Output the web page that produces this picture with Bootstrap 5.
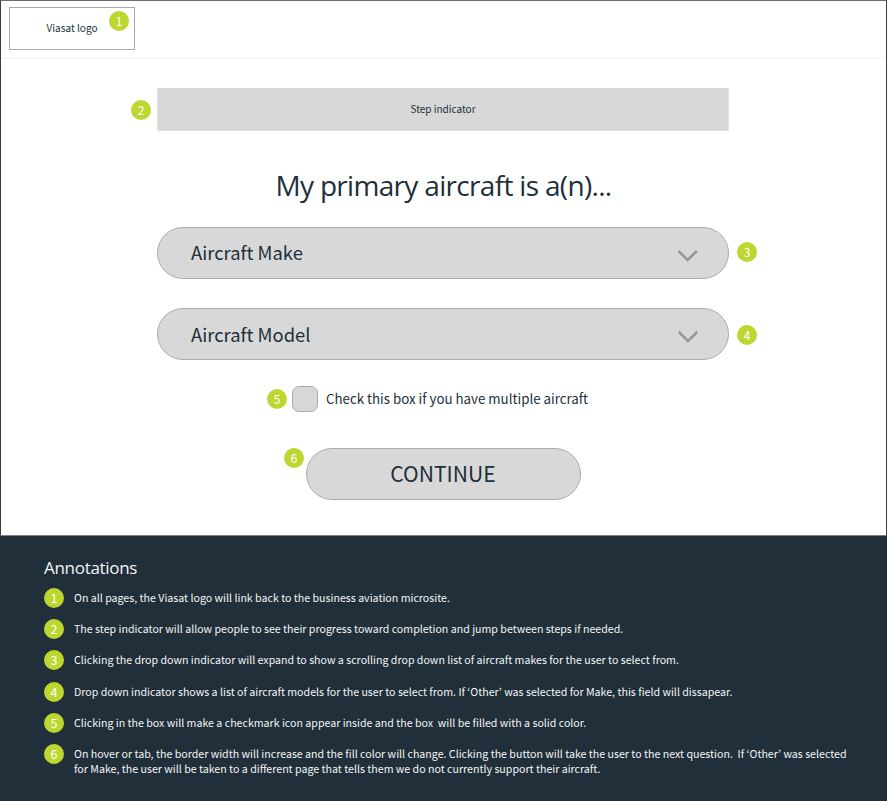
<!DOCTYPE html>
<html lang="en">
<head>
<meta charset="utf-8">
<meta name="viewport" content="width=device-width, initial-scale=1">
<title>Primary aircraft</title>
<link href="https://cdn.jsdelivr.net/npm/bootstrap@5.3.0/dist/css/bootstrap.min.css" rel="stylesheet">
<style>
:root{--ink:#212f3a;--fill:#d8d8d8;--edge:#acacac;--lime:#bed730}
body{font-family:"Noto Sans CJK KR",sans-serif;color:var(--ink);background:var(--ink);height:801px;overflow:hidden}
.screen{height:536px;border:1px solid #3c3c3c;border-top-color:#6d6d6d;border-bottom-color:#7d8488}
.topbar{height:58px;padding:6px 8px;border-bottom:2px solid #f8f8f8}
.logo-box{width:126px;height:43px;padding-bottom:2px;border:1px solid #a9a9a9;font-size:10.05px}
.dot{width:20px;height:20px;flex:none;border-radius:50%;background:var(--lime);color:#fff;font-size:12px;line-height:20px;text-align:center}
.logo-box .dot{top:3px;right:5px}
.flow{width:572px;margin-left:156px;padding-top:29px}
.steps{height:43px;padding-bottom:2px;background:var(--fill);border:1px solid #e2e2e2;border-top-color:var(--fill);font-size:10px}
.steps .dot{left:-27px;top:11px}
.title-lg{font:400 28px/36px "Open Sans",sans-serif;letter-spacing:-.68px;margin:36px 0 24px;padding-left:1px}
.pill{height:52px;border:1px solid var(--edge);border-radius:26px;background:var(--fill);color:var(--ink)}
.pick{font-size:18.4px;padding:0 30px 0 33px}
.pick+.pick{margin-top:29px}
.pick .dot{right:-29px}
.pick-make .dot{top:14px}
.pick-model{padding-top:2px}
.pick-model .dot{top:16px}
.pick svg{margin-top:5px}
.pick-model svg{margin-top:3px}
.multi{margin:26px 0 0 110px;height:26px;font-size:13.3px}
.tick{width:26px;height:26px;border:1px solid var(--edge);border-radius:7px;background:var(--fill);margin:0 8px 0 5px}
.go{width:275px;margin:36px 0 0 149px;padding-right:1px;font-size:21.1px}
.go .dot{left:-23px;top:-1px}
.notes{padding:22px 30px 0 44px;color:#f3f5f5}
.notes h2{font:400 17px/20px "Open Sans",sans-serif;letter-spacing:-.3px;margin:0 0 10px}
.notes li{min-height:20px;margin-bottom:11.2px;gap:10px;font-size:10.64px;line-height:15px}
.notes p{margin:0;padding-top:2px}
.notes .dot{font-size:12.5px}
</style>
</head>
<body>
<main class="screen bg-white">
  <header class="topbar">
    <div class="logo-box position-relative d-flex align-items-center justify-content-center">Viasat logo<span class="dot position-absolute">1</span></div>
  </header>
  <form class="flow">
    <div class="steps position-relative d-flex align-items-center justify-content-center">Step indicator<span class="dot position-absolute">2</span></div>
    <h1 class="title-lg text-center">My primary aircraft is a(n)...</h1>
    <div class="pill pick pick-make position-relative d-flex align-items-center justify-content-between">Aircraft Make
      <svg width="20" height="12" viewBox="0 0 20 12" fill="none" stroke="#979797" stroke-width="2.6"><path d="M.4 1 9.6 10 18.8 1"/></svg>
      <span class="dot position-absolute">3</span></div>
    <div class="pill pick pick-model position-relative d-flex align-items-center justify-content-between">Aircraft Model
      <svg width="20" height="12" viewBox="0 0 20 12" fill="none" stroke="#979797" stroke-width="2.6"><path d="M.8 1 10 10 19.2 1"/></svg>
      <span class="dot position-absolute">4</span></div>
    <label class="multi d-flex align-items-center"><span class="dot">5</span><span class="tick"></span>Check this box if you have multiple aircraft</label>
    <div class="pill go position-relative d-flex align-items-center justify-content-center" role="button">CONTINUE<span class="dot position-absolute">6</span></div>
  </form>
</main>
<section class="notes">
  <h2>Annotations</h2>
  <ol class="list-unstyled m-0">
    <li class="d-flex"><span class="dot">1</span><p>On all pages, the Viasat logo will link back to the business aviation microsite.</p></li>
    <li class="d-flex"><span class="dot">2</span><p>The step indicator will allow people to see their progress toward completion and jump between steps if needed.</p></li>
    <li class="d-flex"><span class="dot">3</span><p>Clicking the drop down indicator will expand to show a scrolling drop down list of aircraft makes for the user to select from.</p></li>
    <li class="d-flex"><span class="dot">4</span><p>Drop down indicator shows a list of aircraft models for the user to select from. If ‘Other’ was selected for Make, this field will dissapear.</p></li>
    <li class="d-flex"><span class="dot">5</span><p>Clicking in the box will make a checkmark icon appear inside and the box&nbsp; will be filled with a solid color.</p></li>
    <li class="d-flex"><span class="dot">6</span><p>On hover or tab, the border width will increase and the fill color will change. Clicking the button will take the user to the next question.&nbsp; If ‘Other’ was selected<br>for Make, the user will be taken to a different page that tells them we do not currently support their aircraft.</p></li>
  </ol>
</section>
<script src="https://cdn.jsdelivr.net/npm/bootstrap@5.3.0/dist/js/bootstrap.bundle.min.js"></script>
</body>
</html>
